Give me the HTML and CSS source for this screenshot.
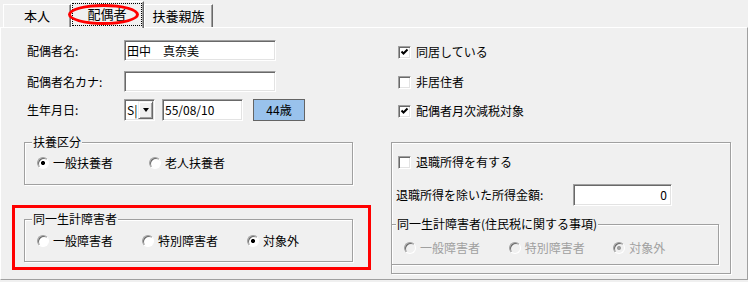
FILE: index.html
```html
<!DOCTYPE html>
<html lang="ja">
<head>
    <meta charset="UTF-8">
    <title>配偶者</title>
    <link rel="stylesheet" href="styles.css">
</head>
<body>
    <!-- タブ -->
    <div class="tabs">
        <div class="tab tab-1">本人</div>
        <div class="tab tab-active">
            <span class="focus">配偶者</span>
            <span class="mark-ellipse"></span>
        </div>
        <div class="tab tab-3">扶養親族</div>
    </div>

    <div class="panel">
        <!-- 左側 -->
        <div class="col-left">
            <div class="row row-1">
                <span class="label">配偶者名:</span>
                <span class="field field-name">田中　真奈美</span>
            </div>
            <div class="row row-2">
                <span class="label">配偶者名カナ:</span>
                <span class="field field-name"></span>
            </div>
            <div class="row row-3">
                <span class="label">生年月日:</span>
                <span class="combo">
                    <span class="combo-text">S|</span>
                    <span class="combo-btn"><span class="arrow"></span></span>
                </span>
                <span class="field field-date">55/08/10</span>
                <span class="age-btn">44歳</span>
            </div>

            <div class="group group-left group-fuyo">
                <div class="group-title">扶養区分</div>
                <div class="radios">
                    <label class="radio-item"><span class="radio checked"></span>一般扶養者</label>
                    <label class="radio-item"><span class="radio"></span>老人扶養者</label>
                </div>
            </div>

            <div class="mark-rect">
                <div class="group group-left">
                    <div class="group-title">同一生計障害者</div>
                    <div class="radios">
                        <label class="radio-item"><span class="radio"></span>一般障害者</label>
                        <label class="radio-item"><span class="radio"></span>特別障害者</label>
                        <label class="radio-item"><span class="radio checked"></span>対象外</label>
                    </div>
                </div>
            </div>
        </div>

        <!-- 右側 -->
        <div class="col-right">
            <div class="check-row check-row-1">
                <span class="check checked"><svg width="9" height="9" viewBox="0 0 9 9"><path d="M1.5 3.5 L3.5 5.5 L7.5 1.5" fill="none" stroke="#000" stroke-width="2"/></svg></span>
                同居している
            </div>
            <div class="check-row check-row-2">
                <span class="check"></span>
                非居住者
            </div>
            <div class="check-row check-row-3">
                <span class="check checked"><svg width="9" height="9" viewBox="0 0 9 9"><path d="M1.5 3.5 L3.5 5.5 L7.5 1.5" fill="none" stroke="#000" stroke-width="2"/></svg></span>
                配偶者月次減税対象
            </div>

            <div class="group group-retire">
                <div class="check-row check-row-retire">
                    <span class="check"></span>
                    退職所得を有する
                </div>
                <div class="income-row">
                    <span class="income-label">退職所得を除いた所得金額:</span>
                    <span class="field field-amount">0</span>
                </div>
                <div class="group group-inner">
                    <div class="group-title">同一生計障害者(住民税に関する事項)</div>
                    <div class="radios">
                        <label class="radio-item disabled"><span class="radio"></span>一般障害者</label>
                        <label class="radio-item disabled"><span class="radio"></span>特別障害者</label>
                        <label class="radio-item disabled"><span class="radio checked"></span>対象外</label>
                    </div>
                </div>
            </div>
        </div>
    </div>
</body>
</html>
```

FILE: styles.css
```css
body {
    margin: 0;
    width: 748px;
    height: 282px;
    background: #f0f0f0;
    font-family: "Noto Sans CJK JP", "Liberation Sans", sans-serif;
    font-size: 12px;
    line-height: 14px;
    color: #000;
    overflow: hidden;
}

/* タブ */
.tabs {
    display: flex;
    align-items: flex-end;
    height: 27px;
    padding-left: 3px;
}

.tab {
    box-sizing: border-box;
    height: 23px;
    display: flex;
    align-items: center;
    justify-content: center;
    border-top: 1px solid #fff;
    border-left: 1px solid #fff;
    border-right: 1px solid #696969;
    box-shadow: inset -1px 0 #a0a0a0;
    font-size: 13px;
}

.tab-1 { width: 68px; }
.tab-3 { width: 69px; }

.tab-active {
    position: relative;
    z-index: 1;
    width: 73px;
    height: 27px;
    margin-bottom: -1px;
    background: #f0f0f0;
    align-items: stretch;
}

.focus {
    flex: 1;
    display: flex;
    align-items: center;
    justify-content: center;
    margin: 1px 1px 2px 0;
    padding-bottom: 2px;
    border: 1px dotted #000;
}

.mark-ellipse {
    position: absolute;
    left: -4px;
    top: 2px;
    width: 71px;
    height: 21px;
    box-sizing: border-box;
    border: 3px solid #f00;
    border-radius: 50%;
}

/* パネル */
.panel {
    box-sizing: border-box;
    height: 253px;
    border: 1px solid;
    border-color: #fff #a0a0a0 #a0a0a0 #fff;
    display: grid;
    grid-template-columns: 390px 1fr;
}

.row {
    display: flex;
    align-items: center;
    padding-left: 26px;
}

.row-1 { margin-top: 12px; height: 21px; }
.row-2 { margin-top: 10px; height: 21px; }
.row-3 { margin-top: 7px; height: 22px; }

.label {
    width: 97px;
}

.field {
    box-sizing: border-box;
    height: 100%;
    display: flex;
    align-items: center;
    padding-left: 2px;
    background: #fff;
    border: 1px solid;
    border-color: #a0a0a0 #fff #fff #a0a0a0;
    box-shadow: inset 1px 1px #696969, inset -1px -1px #e3e3e3;
}

.field-name { width: 152px; }
.field-date { width: 81px; margin-left: 7px; }

.combo {
    box-sizing: border-box;
    width: 31px;
    height: 100%;
    display: flex;
    align-items: center;
    padding: 1px;
    background: #fff;
    border: 1px solid;
    border-color: #a0a0a0 #fff #fff #a0a0a0;
    box-shadow: inset 1px 1px #696969, inset -1px -1px #e3e3e3;
}

.combo-text {
    flex: 1;
    padding-left: 1px;
}

.combo-btn {
    box-sizing: border-box;
    width: 15px;
    height: 18px;
    display: flex;
    align-items: center;
    justify-content: center;
    background: #f0f0f0;
    border: 1px solid;
    border-color: #f0f0f0 #696969 #696969 #f0f0f0;
    box-shadow: inset 1px 1px #fff, inset -1px -1px #a0a0a0;
}

.arrow {
    width: 0;
    height: 0;
    border-left: 3.5px solid transparent;
    border-right: 3.5px solid transparent;
    border-top: 4px solid #000;
}

.age-btn {
    box-sizing: border-box;
    width: 52px;
    height: 100%;
    margin-left: 10px;
    display: flex;
    align-items: center;
    justify-content: center;
    background: #99c2ec;
    border: 1px solid #646464;
}

/* グループボックス */
.group {
    box-sizing: border-box;
    border: 1px solid #a0a0a0;
    box-shadow: inset 1px 1px #fff, 1px 1px #fff;
}

.group-title {
    width: fit-content;
    margin: -8px 0 0 7px;
    padding: 0 1px;
    background: #f0f0f0;
}

.group-left {
    width: 329px;
    height: 43px;
}

.group-fuyo {
    margin: 21px 0 0 23px;
}

.radios {
    display: flex;
    margin-top: 6px;
    padding-left: 12px;
    height: 16px;
    align-items: center;
}

.radio-item {
    width: 112px;
    display: flex;
    align-items: center;
    gap: 4px;
}

.radio {
    box-sizing: border-box;
    width: 12px;
    height: 12px;
    border-radius: 50%;
    background: #fff;
    border: 1px solid;
    border-color: #a0a0a0 #fff #fff #a0a0a0;
    box-shadow: inset 1px 1px #696969;
}

.radio.checked {
    background: radial-gradient(circle, #000 0 1.8px, #fff 2.3px);
}

.disabled {
    color: #a0a0a0;
}

.disabled .radio {
    background: #f0f0f0;
}

.disabled .radio.checked {
    background: radial-gradient(circle, #a0a0a0 0 1.8px, #f0f0f0 2.3px);
}

.mark-rect {
    width: 359px;
    height: 65px;
    box-sizing: border-box;
    margin: 20px 0 0 11px;
    padding: 11px 0 0 9px;
    border: 3px solid #f00;
}

.mark-rect .radios {
    margin-top: 7px;
}

/* 右側 */
.check-row {
    display: flex;
    align-items: center;
    gap: 5px;
    height: 16px;
    padding-left: 7px;
}

.check-row-1 { margin-top: 16px; }
.check-row-2 { margin-top: 14px; }
.check-row-3 { margin-top: 13px; }

.check {
    box-sizing: border-box;
    width: 13px;
    height: 13px;
    display: flex;
    align-items: center;
    justify-content: center;
    background: #fff;
    border: 1px solid;
    border-color: #a0a0a0 #fff #fff #a0a0a0;
    box-shadow: inset 1px 1px #696969, inset -1px -1px #e3e3e3;
}

.group-retire {
    width: 340px;
    height: 132px;
    margin-top: 23px;
}

.check-row-retire {
    margin-top: 11px;
    padding-left: 6px;
}

.income-row {
    display: flex;
    align-items: center;
    height: 22px;
    margin-top: 14px;
    padding-left: 4px;
}

.income-label {
    width: 177px;
}

.field-amount {
    width: 99px;
    justify-content: flex-end;
    padding: 0 4px 0 0;
}

.group-inner {
    width: 328px;
    height: 41px;
    margin: 18px 0 0 -1px;
}

.group-inner .group-title {
    margin-left: 4px;
}

.group-inner .radios {
    margin-top: 9px;
}
```
